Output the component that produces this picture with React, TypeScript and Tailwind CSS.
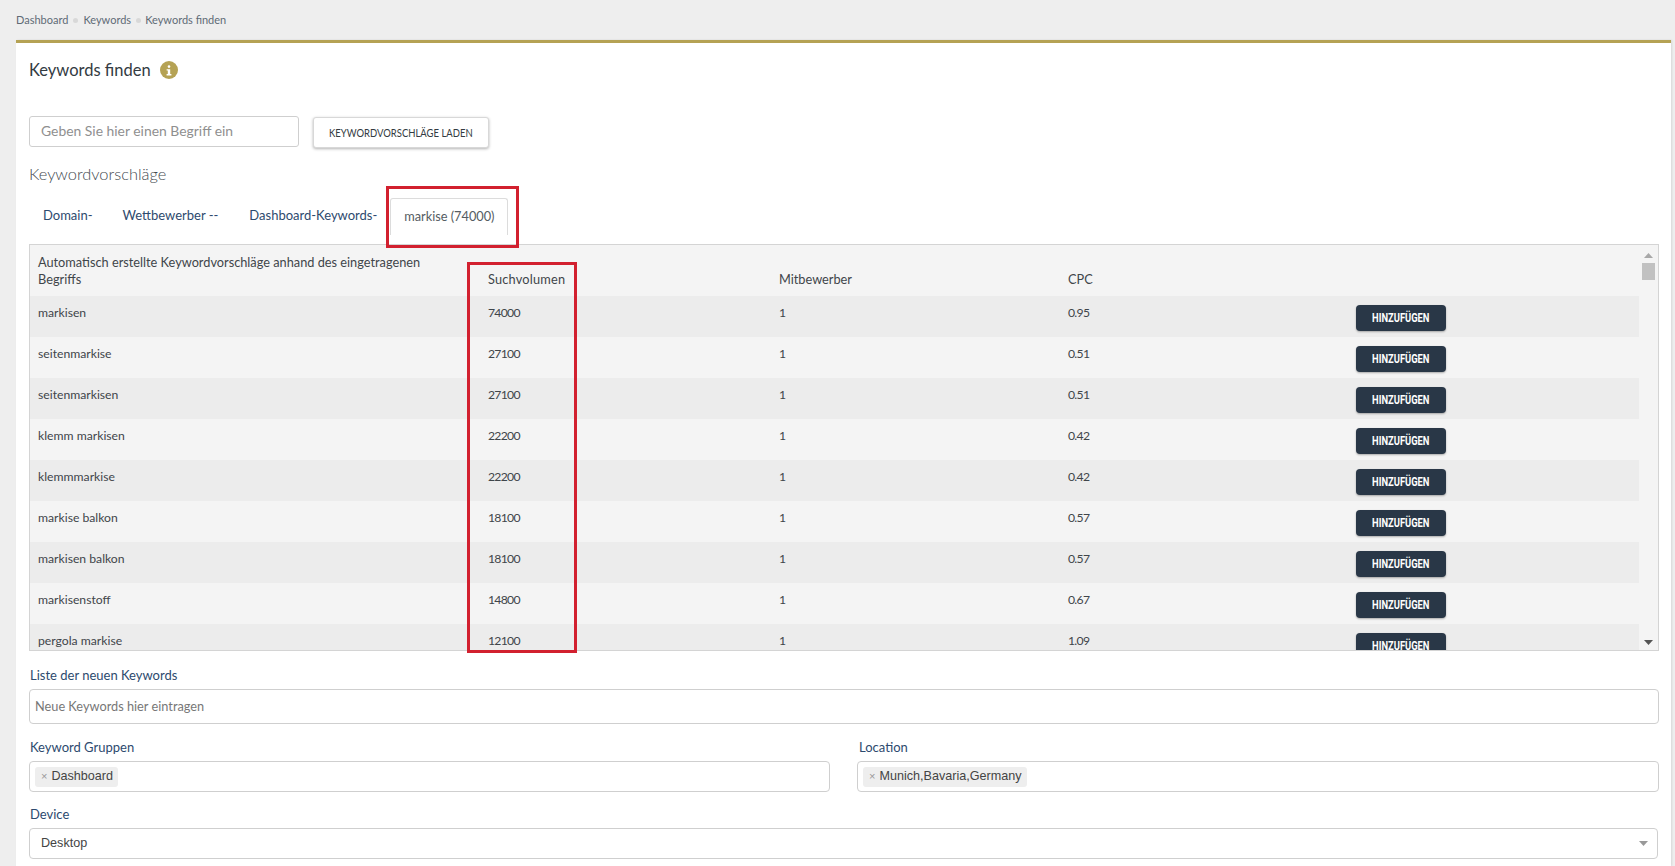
const rows: [string, string, string][] = [
  ["markisen", "74000", "0.95"],
  ["seitenmarkise", "27100", "0.51"],
  ["seitenmarkisen", "27100", "0.51"],
  ["klemm markisen", "22200", "0.42"],
  ["klemmmarkise", "22200", "0.42"],
  ["markise balkon", "18100", "0.57"],
  ["markisen balkon", "18100", "0.57"],
  ["markisenstoff", "14800", "0.67"],
  ["pergola markise", "12100", "1.09"],
];

const sans = "font-['Lato','Noto_Sans',sans-serif]";

function Dot() {
  return <span className="mx-[5px] inline-block h-[5px] w-[5px] rounded-full bg-[#d8d8d8]" />;
}

function Caret({ up, color }: { up?: boolean; color: string }) {
  return (
    <svg width="9" height="5" viewBox="0 0 9 5" className="block">
      <path d={up ? "M4.5 0 L9 5 L0 5 Z" : "M0 0 L9 0 L4.5 5 Z"} fill={color} />
    </svg>
  );
}

function Chip({ label }: { label: string }) {
  return (
    <span className="flex h-[20px] items-center rounded-[3px] bg-[#eeeeee] pl-[6px] pr-[5px] font-['Liberation_Sans',sans-serif] text-[12.6px] text-[#444]">
      <span className="mr-[4px] text-[11px] text-[#999]">×</span>
      {label}
    </span>
  );
}

export default function App() {
  return (
    <div className={`${sans} h-[866px] w-[1675px] overflow-hidden bg-[#eeeeee] text-[#3a3f44]`}>
      <div className="flex h-[40px] items-center pl-[16px] text-[11px] text-[#5f6b76]">
        <span>Dashboard</span>
        <Dot />
        <span>Keywords</span>
        <Dot />
        <span className="-ml-[1px]">Keywords finden</span>
      </div>
      <div className="ml-[16px] mr-[4px] h-[826px] border-t-[3px] border-[#b5a254] bg-white pl-[13px] pr-[12px] shadow-[1px_0_2px_rgba(0,0,0,0.1)]">
        <div className="flex h-[52px] items-center pt-[2px]">
          <h1 className="text-[16.5px] leading-none text-[#333b42]">Keywords finden</h1>
          <span className="ml-[9px] flex h-[18px] w-[18px] items-center justify-center rounded-full bg-[#b5a254]">
            <svg width="8" height="11" viewBox="0 0 8 11">
              <circle cx="4" cy="1.6" r="1.3" fill="#fff" />
              <path d="M1.6 4.2h3.6v4.9h1.2v1.4H1.6V9.1h1.2V5.6H1.6z" fill="#fff" />
            </svg>
          </span>
        </div>
        <div className="mt-[21px] flex items-start">
          <div className="flex h-[31px] w-[270px] items-center rounded-[3px] border border-[#cfcfcf] pl-[11px] text-[13.9px] text-[#8f8f8f]">
            Geben Sie hier einen Begriff ein
          </div>
          <button className="ml-[14px] mt-[1px] flex h-[31px] w-[176px] items-center justify-center rounded-[3px] border border-[#d8d8d8] bg-white text-[12px] text-[#333b42] shadow-[0_1px_3px_rgba(0,0,0,0.3)]">
            <span className="inline-block scale-x-[0.79] whitespace-nowrap">KEYWORDVORSCHLÄGE LADEN</span>
          </button>
        </div>
        <h2 className="mt-[16px] text-[16.4px] font-light leading-[20px] text-[#444a50]">Keywordvorschläge</h2>
        <div className="relative mt-[14px] flex h-[46px] items-end text-[13px] text-[#2d4a6e]">
          <span className="mb-[19px] ml-[14px]">Domain-</span>
          <span className="mb-[19px] ml-[30px]">Wettbewerber --</span>
          <span className="mb-[19px] ml-[31px]">Dashboard-Keywords-</span>
          <span className="mb-[9px] ml-[13px] flex h-[37px] w-[118px] items-center justify-center rounded-t-[3px] border border-b-0 border-[#dcdcdc] text-[12.75px] text-[#555c62]">
            markise (74000)
          </span>
          <div className="pointer-events-none absolute left-[357px] top-[-12px] z-10 h-[62px] w-[133px] border-[3px] border-[#d2202f]" />
        </div>
        <div className="flex h-[407px] overflow-hidden border border-[#d4d4d4] bg-[#f4f4f4] text-[12.2px] text-[#3f454a]">
          <div className="w-[1609px] overflow-hidden">
            <div className="flex h-[51px] items-end pb-[8px] text-[12.75px] text-[#3f454a]">
              <div className="w-[458px] pl-[8px] pr-[40px] leading-[17px]">
                Automatisch erstellte Keywordvorschläge anhand des eingetragenen Begriffs
              </div>
              <div className="w-[291px] leading-[17px] tracking-[0.2px]">Suchvolumen</div>
              <div className="w-[289px] leading-[17px]">Mitbewerber</div>
              <div className="leading-[17px]">CPC</div>
            </div>
            {rows.map(([k, v, c], i) => (
              <div
                key={k}
                className={`flex h-[41px] shrink-0 pt-[8px] ${i % 2 === 0 ? "bg-[#ececec]" : "bg-[#f4f4f4]"}`}
              >
                <div className="w-[458px] pl-[8px] leading-[17px]">{k}</div>
                <div className="w-[291px] leading-[17px] tracking-[-0.7px]">{v}</div>
                <div className="w-[289px] leading-[17px] tracking-[-0.7px]">1</div>
                <div className="w-[288px] leading-[17px] tracking-[-0.7px]">{c}</div>
                <button className="mt-[1px] flex h-[26px] w-[90px] items-center justify-center rounded-[4px] bg-[#293747] font-['Roboto',sans-serif] text-[12px] font-bold text-white shadow-[0_1px_2px_rgba(0,0,0,0.3)]">
                  <span className="inline-block scale-x-[0.78] whitespace-nowrap">HINZUFÜGEN</span>
                </button>
              </div>
            ))}
          </div>
          <div className="flex flex-1 flex-col items-center bg-[#f4f4f4] pb-[5px] pt-[8px]">
            <Caret up color="#a8a8a8" />
            <div className="mt-[5px] h-[17px] w-[13px] bg-[#c1c1c1]" />
            <div className="flex-1" />
            <Caret color="#555555" />
          </div>
        </div>
        <div className="pointer-events-none absolute left-[467px] top-[262px] z-10 h-[391px] w-[110px] border-[3px] border-[#d2202f]" />
        <label className="ml-[1px] mt-[15px] block text-[13px] leading-[18px] text-[#2d4a6e]">Liste der neuen Keywords</label>
        <div className="mt-[5px] h-[35px] rounded-[4px] border border-[#cfcfcf] pl-[5px] pt-[7px] text-[12.75px] leading-[18px] text-[#777]">
          Neue Keywords hier eintragen
        </div>
        <div className="mt-[14px] flex gap-[27px]">
          <div className="w-[801px]">
            <label className="ml-[1px] block text-[13px] leading-[18px] text-[#2d4a6e]">Keyword Gruppen</label>
            <div className="mt-[5px] flex h-[31px] items-center rounded-[4px] border border-[#cfcfcf] pl-[5px]">
              <Chip label="Dashboard" />
            </div>
          </div>
          <div className="flex-1">
            <label className="ml-[2px] block text-[13px] leading-[18px] text-[#2d4a6e]">Location</label>
            <div className="mt-[5px] flex h-[31px] items-center rounded-[4px] border border-[#cfcfcf] pl-[5px]">
              <Chip label="Munich,Bavaria,Germany" />
            </div>
          </div>
        </div>
        <label className="ml-[1px] mt-[13px] block text-[13px] leading-[18px] text-[#2d4a6e]">Device</label>
        <div className="mr-[1px] mt-[5px] flex h-[31px] items-center justify-between rounded-[4px] border border-[#cfcfcf] pl-[11px] pr-[9px] font-['Liberation_Sans',sans-serif] text-[12.6px] text-[#444]">
          Desktop
          <Caret color="#999999" />
        </div>
      </div>
    </div>
  );
}
